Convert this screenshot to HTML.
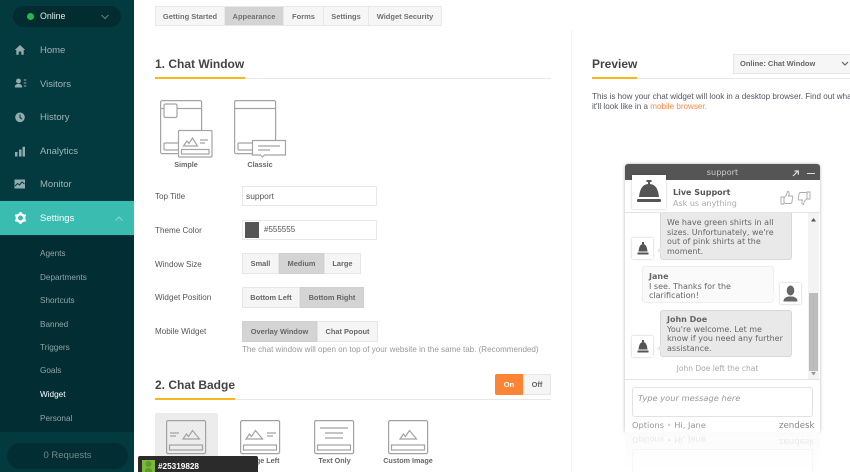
<!DOCTYPE html>
<html><head><meta charset="utf-8">
<style>
html,body{margin:0;padding:0;width:850px;height:472px;overflow:hidden;background:#fff;font-family:"Liberation Sans",Arial,sans-serif}
body{filter:blur(.3px)}
.a{position:absolute;white-space:nowrap}
#side{left:0;top:0;width:134px;height:472px;background:#023a40}
.nav{left:40px;font-size:9.500px;color:#9fb4b6;line-height:12px}
.sub{left:40px;font-size:8.200px;color:#8fa5a7;line-height:12px}
.tab{position:absolute;top:6px;height:20px;background:#f6f6f6;border:1px solid #e8e8e8;border-left:none;box-sizing:border-box;font-size:7.500px;font-weight:bold;color:#707070;line-height:19px;text-align:center}
.lab{left:155px;font-size:8.100px;color:#555;line-height:12px}
.h{font-size:12px;font-weight:bold;color:#444;line-height:15px}
.hr{height:1px;background:#e8e8e8}
.or{height:2px;background:#f6b71e}
.btn{position:absolute;height:21px;box-sizing:border-box;border:1px solid #e6e6e6;background:#f5f5f5;font-size:7.400px;font-weight:bold;color:#666;line-height:19px;text-align:center}
.on{background:#d4d4d4;border-color:#d0d0d0}
.cap{font-size:7.200px;font-weight:bold;color:#666;line-height:10px;text-align:center}
.w{font-family:"DejaVu Sans",sans-serif}
.msg{font-family:"DejaVu Sans",sans-serif;font-size:8px;line-height:9.700px;color:#666}
.tick{position:absolute;width:5px;height:5px;transform:rotate(45deg);box-sizing:border-box}
svg{position:absolute;overflow:visible}
</style></head><body>

<div class="a" id="side"></div>
<div class="a" style="left:0;top:236px;width:134px;height:196px;background:#022e33"></div>
<div class="a" style="left:13px;top:6px;width:108px;height:21px;border-radius:11px;background:#012c30"></div>
<div class="a" style="left:27px;top:13px;width:7px;height:7px;border-radius:50%;background:#22b84c"></div>
<div class="a" style="left:40px;top:10px;font-size:8.800px;color:#dfe8e8;line-height:13px">Online</div>
<svg style="left:100px;top:14px" width="10" height="6"><path d="M1.500 1l3.500 3.500L8.500 1" fill="none" stroke="#5c7a7d" stroke-width="1.200"/></svg>

<svg style="left:14px;top:44px" width="12" height="11"><path d="M0.800 6L6 1l5.200 5h-1.500v4.800H7.300V7.500H4.700v3.300H2.300V6z" fill="#94abad"/></svg>
<div class="a nav" style="top:45px">Home</div>
<svg style="left:14px;top:78px" width="13" height="11"><circle cx="4.500" cy="3" r="2.400" fill="#94abad"/><path d="M0.800 9.500c0-2.500 1.500-3.600 3.700-3.600s3.700 1.100 3.700 3.600z" fill="#94abad"/><path d="M9.800 2h2.500M9.800 5h2.500M9.800 8h2.500" stroke="#94abad" stroke-width="1"/></svg>
<div class="a nav" style="top:79px">Visitors</div>
<svg style="left:15px;top:112px" width="11" height="11"><circle cx="5" cy="5.300" r="4.800" fill="#94abad"/><path d="M5 2.500v3l2 1.500" fill="none" stroke="#023a40" stroke-width="1.100"/></svg>
<div class="a nav" style="top:112px">History</div>
<svg style="left:15px;top:146px" width="11" height="11"><path d="M0 6h2.500v4.500H0zM4 3.500h2.500v7H4zM7.500 .8h2.500v9.700H7.500z" fill="#94abad"/></svg>
<div class="a nav" style="top:146px">Analytics</div>
<svg style="left:14px;top:179px" width="12" height="10"><rect x=".5" y=".5" width="10.500" height="9" fill="#94abad"/><path d="M1 7l2.500-2.500 2 1.500L8 3l2.500 2" fill="none" stroke="#023a40" stroke-width="1"/></svg>
<div class="a nav" style="top:179px">Monitor</div>

<div class="a" style="left:0;top:201px;width:134px;height:34px;background:#3abcb0"></div>
<svg style="left:14px;top:211px" width="13" height="14" viewBox="0 0 13 14"><circle cx="6.500" cy="7" r="3.700" fill="none" stroke="#fff" stroke-width="2.400"/><path d="M6.500 1v2M6.500 11v2M1.300 4l1.700 1M10 9l1.700 1M1.300 10l1.700-1M10 5l1.700-1" stroke="#fff" stroke-width="2.200"/></svg>
<div class="a nav" style="top:213px;color:#fff">Settings</div>
<svg style="left:114px;top:216px" width="10" height="6"><path d="M1.500 4.500L5 1l3.500 3.500" fill="none" stroke="#7fd6ce" stroke-width="1.200"/></svg>

<div class="a sub" style="top:248px">Agents</div>
<div class="a sub" style="top:272px">Departments</div>
<div class="a sub" style="top:295px">Shortcuts</div>
<div class="a sub" style="top:319px">Banned</div>
<div class="a sub" style="top:342px">Triggers</div>
<div class="a sub" style="top:365px">Goals</div>
<div class="a sub" style="top:389px;color:#fff">Widget</div>
<div class="a sub" style="top:413px">Personal</div>
<div class="a" style="left:7px;top:443px;width:121px;height:26px;border-radius:13px;background:#022e33;color:#6f8a8c;font-size:9.500px;line-height:26px;text-align:center">0 Requests</div>

<!-- tabs -->
<div class="tab" style="left:155px;width:70px;border-left:1px solid #e8e8e8">Getting Started</div>
<div class="tab" style="left:225px;width:59px;background:#d4d4d4">Appearance</div>
<div class="tab" style="left:284px;width:40px">Forms</div>
<div class="tab" style="left:324px;width:45px">Settings</div>
<div class="tab" style="left:369px;width:73px">Widget Security</div>

<!-- section 1 -->
<div class="a h" style="left:155px;top:57px">1. Chat Window</div>
<div class="a hr" style="left:155px;top:78px;width:396px"></div>
<div class="a or" style="left:155px;top:77px;width:90px"></div>

<svg style="left:160px;top:100px" width="70" height="58" fill="none" stroke="#a4a4a4" stroke-width="1.200">
<rect x=".6" y=".6" width="41" height="53" rx="1.500"/><path d="M.6 8.500h41"/><rect x="4" y="4" width="13" height="13.500" rx="1.500" fill="#fff"/><rect x="4" y="43" width="16" height="7" rx="1"/>
<rect x="18.500" y="30.500" width="33.500" height="26.500" rx="1" fill="#fff"/><rect x="21.500" y="49.500" width="27.500" height="4.500"/><path d="M23.500 46l3.500-5 2 2.500 3.500-5.500 5 8zM40 40h8M40 43h5"/></svg>
<div class="a cap" style="left:160px;top:160px;width:52px">Simple</div>
<svg style="left:234px;top:100px" width="60" height="58" fill="none" stroke="#a4a4a4" stroke-width="1.200">
<rect x=".6" y=".6" width="41" height="53" rx="1.500"/><path d="M.6 8.500h41"/><rect x="4" y="43" width="16" height="7" rx="1"/>
<path d="M18.500 40.500h33v14.500H30.500l-2 2-2-2h-8z" fill="#fff"/><path d="M24 46h22M24 50h12"/></svg>
<div class="a cap" style="left:234px;top:160px;width:52px">Classic</div>

<div class="a lab" style="top:191px">Top Title</div>
<div class="a" style="left:242px;top:186px;width:135px;height:20px;box-sizing:border-box;border:1px solid #e8e8e8;font-size:8.400px;color:#555;line-height:18px;padding-left:3px">support</div>
<div class="a lab" style="top:225px">Theme Color</div>
<div class="a" style="left:242px;top:220px;width:135px;height:20px;box-sizing:border-box;border:1px solid #e8e8e8;font-size:8px;color:#555;line-height:18px;padding-left:21px">#555555</div>
<div class="a" style="left:245px;top:222px;width:14px;height:16px;background:#555"></div>
<div class="a lab" style="top:259px">Window Size</div>
<div class="btn" style="left:242px;top:253px;width:37px">Small</div>
<div class="btn on" style="left:279px;top:253px;width:45px">Medium</div>
<div class="btn" style="left:324px;top:253px;width:37px">Large</div>
<div class="a lab" style="top:292px">Widget Position</div>
<div class="btn" style="left:242px;top:287px;width:58px">Bottom Left</div>
<div class="btn on" style="left:300px;top:287px;width:64px">Bottom Right</div>
<div class="a lab" style="top:326px">Mobile Widget</div>
<div class="btn on" style="left:242px;top:321px;width:75px">Overlay Window</div>
<div class="btn" style="left:317px;top:321px;width:61px">Chat Popout</div>
<div class="a" style="left:242px;top:344px;font-size:8.050px;color:#999;line-height:12px">The chat window will open on top of your website in the same tab. (Recommended)</div>

<!-- section 2 -->
<div class="a h" style="left:155px;top:378px">2. Chat Badge</div>
<div class="a hr" style="left:155px;top:399px;width:396px"></div>
<div class="a or" style="left:155px;top:398px;width:80px"></div>
<div class="a" style="left:495px;top:374px;width:28px;height:21px;background:#fb8535;border-radius:2px 0 0 2px;color:#fff;font-size:7.500px;font-weight:bold;line-height:21px;text-align:center">On</div>
<div class="a" style="left:523px;top:374px;width:28px;height:21px;box-sizing:border-box;border:1px solid #e6e6e6;background:#f5f5f5;color:#666;font-size:7.500px;font-weight:bold;line-height:19px;text-align:center">Off</div>

<div class="a" style="left:155px;top:413px;width:63px;height:59px;background:#ececec;border-radius:2px"></div>
<svg style="left:166px;top:420px" width="42" height="36" fill="none" stroke="#a2a2a2" stroke-width="1.200"><rect x=".6" y=".6" width="39" height="33" rx="1.500"/><rect x="3.500" y="25" width="33" height="5"/><path d="M4 13h9M4 16h6M17 19l3.500-5 2 2.500 4-6 7 8.500z"/></svg>
<svg style="left:240px;top:420px" width="42" height="36" fill="none" stroke="#a2a2a2" stroke-width="1.200"><rect x=".6" y=".6" width="39" height="33" rx="1.500"/><rect x="3.500" y="25" width="33" height="5"/><path d="M6 19l3.500-5 2 2.500 4-6 7 8.500zM27 13h9M27 16h6"/></svg>
<svg style="left:314px;top:420px" width="42" height="36" fill="none" stroke="#a2a2a2" stroke-width="1.200"><rect x=".6" y=".6" width="39" height="33" rx="1.500"/><rect x="3.500" y="25" width="33" height="5"/><path d="M6 8h28M11 13h18M11 18h18"/></svg>
<svg style="left:388px;top:420px" width="42" height="36" fill="none" stroke="#a2a2a2" stroke-width="1.200"><rect x=".6" y=".6" width="39" height="33" rx="1.500"/><rect x="3.500" y="25" width="33" height="5"/><path d="M12 19l3.500-5 2 2.500 4-6 7 8.500z"/></svg>
<div class="a cap" style="left:240px;top:456px;width:43px">Image Left</div>
<div class="a cap" style="left:314px;top:456px;width:41px">Text Only</div>
<div class="a cap" style="left:378px;top:456px;width:60px">Custom Image</div>

<div class="a" style="left:138px;top:456px;width:120px;height:16px;background:#2b2b2b;border-radius:2px 2px 0 0"></div>
<div class="a" style="left:142px;top:460px;width:13px;height:12px;background:#7cb83a"></div>
<svg style="left:144px;top:460px" width="9" height="12"><circle cx="4.500" cy="4" r="3" fill="#5c9a2a"/><path d="M1 12c0-3 1.500-4 3.500-4s3.500 1 3.500 4z" fill="#5c9a2a"/></svg>
<div class="a" style="left:158px;top:461px;font-size:8.200px;font-weight:bold;color:#fff;line-height:12px">#25319828</div>

<!-- right -->
<div class="a" style="left:571px;top:30px;width:1px;height:442px;background:#f2f2f2"></div>
<div class="a h" style="left:592px;top:57px">Preview</div>
<div class="a hr" style="left:592px;top:78px;width:258px"></div>
<div class="a or" style="left:592px;top:77px;width:45px"></div>
<div class="a" style="left:733px;top:54px;width:118px;height:20px;box-sizing:border-box;border:1px solid #e6e6e6;background:#f6f6f6;font-size:7.500px;font-weight:bold;color:#666;line-height:18px;padding-left:6px">Online: Chat Window</div>
<svg style="left:841px;top:61px" width="8" height="6"><path d="M1 1l3 3 3-3" fill="none" stroke="#666" stroke-width="1.200"/></svg>
<div class="a" style="left:592px;top:92px;font-size:8.100px;color:#556;line-height:9.500px">This is how your chat widget will look in a desktop browser. Find out what<br>it'll look like in a <span style="color:#f58b45">mobile browser.</span></div>

<!-- widget -->
<div class="a" style="left:625px;top:164px;width:195px;height:268px;background:#fff;box-shadow:0 0 3px rgba(0,0,0,.3);border-radius:3px 3px 0 0;overflow:hidden"></div>
<div class="a w" style="left:625px;top:164px;width:195px;height:16px;background:#555;border-radius:3px 3px 0 0;color:#ccc;font-size:8.200px;line-height:16px;text-align:center">support</div>
<svg style="left:792px;top:170px" width="8" height="7"><path d="M1 6l5-5M2.500 1H6.300V4.800" fill="none" stroke="#ddd" stroke-width="1.200"/></svg>
<div class="a" style="left:807px;top:172.500px;width:8px;height:1px;background:#ddd"></div>
<div class="a" style="left:625px;top:212px;width:195px;height:1px;background:#e4e4e4"></div>
<div class="a" style="left:632px;top:175px;width:34px;height:34px;background:#fff;box-shadow:0 0 2px rgba(0,0,0,.25)"></div>
<svg style="left:636px;top:180px" width="26" height="24"><rect x="10.500" y="0" width="5" height="2" fill="#555"/><rect x="12" y="1" width="2" height="4" fill="#555"/><path d="M3 17C4 8 7 4 13 4s9 4 10 13z" fill="#555"/><rect x="1" y="19" width="24" height="3" rx="1" fill="#555"/></svg>
<div class="a w" style="left:673px;top:187px;font-size:8px;font-weight:bold;color:#555;line-height:11px">Live Support</div>
<div class="a w" style="left:673px;top:198px;font-size:8px;color:#aaa;line-height:11px">Ask us anything</div>
<svg style="left:780px;top:191px" width="32" height="15" fill="none" stroke="#aaa" stroke-width=".9"><path d="M1 6h3v7H1zM4 6.500l2.500-2.500 1-3.500c1.500 0 2 1.500 1.500 3l-.5 1.500h3.500c1 0 1 1.500.5 2l-.5 4c-.2 1-1 1.500-2 1.500H6l-2-1"/><path d="M30 8H27V1h3zM27 7.500L24.500 10l-1 3.500c-1.500 0-2-1.500-1.500-3l.5-1.500H19c-1 0-1-1.500-.5-2l.5-4c.2-1 1-1.500 2-1.500h4.500l2 1"/></svg>

<!-- messages -->
<div class="a" style="left:660px;top:213px;width:132px;height:47px;background:#e9e9e9;border:1px solid #d8d8d8;border-top:none;box-sizing:border-box;border-radius:0 0 3px 3px"></div>
<div class="tick" style="left:657.500px;top:248px;background:#e9e9e9"></div>
<div class="a msg" style="left:667px;top:218px">We have green shirts in all<br>sizes. Unfortunately, we're<br>out of pink shirts at the<br>moment.</div>
<div class="a" style="left:632px;top:238px;width:21px;height:21px;background:#fff;box-shadow:0 0 2px rgba(0,0,0,.25)"></div>
<svg style="left:637px;top:242px" width="12" height="13"><rect x="5" y="0" width="2" height="2" fill="#555"/><path d="M1.500 9.500C2 4.500 3.500 2 6 2s4 2.500 4.500 7.500z" fill="#555"/><rect x="0.500" y="10.500" width="11" height="2" fill="#555"/></svg>
<div class="a" style="left:642px;top:266px;width:132px;height:37px;background:#fafafa;border:1px solid #eee;box-sizing:border-box;border-radius:3px"></div>
<div class="tick" style="left:771.500px;top:293px;background:#fafafa"></div>
<div class="a msg" style="left:649px;top:272px"><b>Jane</b><br>I see. Thanks for the<br>clarification!</div>
<div class="a" style="left:780px;top:283px;width:21px;height:21px;background:#fff;box-shadow:0 0 2px rgba(0,0,0,.25)"></div>
<svg style="left:783px;top:285px" width="15" height="17"><ellipse cx="7.500" cy="5.500" rx="3.800" ry="5" fill="#666"/><path d="M0.500 16.500c0-3 2-4.500 5-5h4c3 .5 5 2 5 5z" fill="#666"/></svg>
<div class="a" style="left:660px;top:310px;width:132px;height:47px;background:#e9e9e9;border:1px solid #d8d8d8;box-sizing:border-box;border-radius:3px"></div>
<div class="tick" style="left:657.500px;top:346px;background:#e9e9e9"></div>
<div class="a msg" style="left:667px;top:315px"><b>John Doe</b><br>You're welcome. Let me<br>know if you need any further<br>assistance.</div>
<div class="a" style="left:632px;top:336px;width:21px;height:21px;background:#fff;box-shadow:0 0 2px rgba(0,0,0,.25)"></div>
<svg style="left:637px;top:340px" width="12" height="13"><rect x="5" y="0" width="2" height="2" fill="#555"/><path d="M1.500 9.500C2 4.500 3.500 2 6 2s4 2.500 4.500 7.500z" fill="#555"/><rect x="0.500" y="10.500" width="11" height="2" fill="#555"/></svg>
<div class="a w" style="left:625px;top:363px;width:185px;font-size:7.500px;color:#aaa;line-height:11px;text-align:center">John Doe left the chat</div>

<!-- scrollbar -->
<div class="a" style="left:808px;top:213px;width:11px;height:166px;background:#f3f3f3"></div>
<div class="a" style="left:809px;top:293px;width:9px;height:78px;background:#bcbcbc"></div>
<svg style="left:811px;top:218px" width="5" height="4"><path d="M0 3.500L2.500 0 5 3.500z" fill="#555"/></svg>
<svg style="left:811px;top:372px" width="5" height="4"><path d="M0 0L2.500 3.500 5 0z" fill="#999"/></svg>
<div class="a" style="left:625px;top:379px;width:195px;height:1px;background:#e4e4e4"></div>

<div class="a w" style="left:632px;top:387px;width:181px;height:30px;box-sizing:border-box;border:1px solid #e2e2e2;border-radius:3px;font-size:8.300px;font-style:italic;color:#999;padding:4px 5px;line-height:12px">Type your message here</div>
<div class="a w" style="left:632px;top:419px;font-size:8.300px;color:#999;line-height:12px">Options <span style="color:#ccc">•</span> Hi, Jane</div>
<div class="a w" style="left:779px;top:420px;font-size:8.600px;color:#888;line-height:13px">zendesk</div>

<!-- reflection -->
<div class="a" style="left:625px;top:432px;width:195px;height:40px;background:linear-gradient(#fbfbfb,#fff)"></div>
<div class="a w" style="left:632px;top:434px;font-size:8.300px;color:#e9e9e9;line-height:12px;transform:scaleY(-1)">Options • Hi, Jane</div>
<div class="a w" style="left:779px;top:434px;font-size:8.600px;color:#e9e9e9;line-height:13px;transform:scaleY(-1)">zendesk</div>
<div class="a" style="left:632px;top:449px;width:181px;height:23px;box-sizing:border-box;border:1px solid #f7f7f7;border-bottom:none"></div>
</body></html>
